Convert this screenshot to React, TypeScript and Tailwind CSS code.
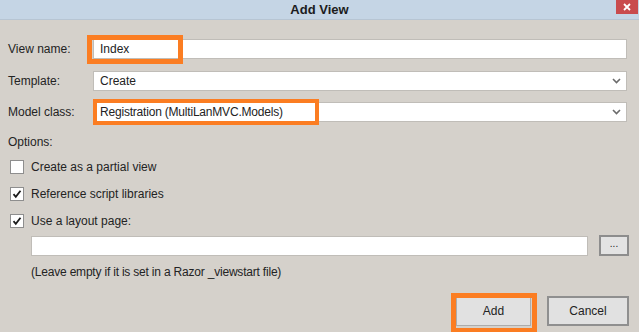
import React from 'react';

const Chevron = () => (
    <svg width="9" height="6" viewBox="0 0 9 6" className="absolute right-[5px] top-1/2 -translate-y-1/2">
        <path d="M1 1l3.5 3.5L8 1" fill="none" stroke="#6b6b6b" strokeWidth="1.6" />
    </svg>
);

function Check({ checked, label }: { checked: boolean; label: string }) {
    return (
        <div className="flex items-center h-[14px] pl-[2px]">
            <div className="w-[14px] h-[14px] bg-white border border-[#8e8e8e] flex items-center justify-center">
                {checked && (
                    <svg width="10" height="10" viewBox="0 0 10 10">
                        <path d="M1.5 5.2l2.3 2.6L8.5 1.8" fill="none" stroke="#1b1b1b" strokeWidth="1.8" />
                    </svg>
                )}
            </div>
            <span className="ml-[7px]">{label}</span>
        </div>
    );
}

export default function App() {
    return (
        <div className="w-[639px] h-[332px] overflow-hidden flex flex-col bg-[#d5d1cb] text-[12px] leading-[14px] text-[#232323] font-['Liberation_Sans',Arial,sans-serif]">
            {/* title bar */}
            <div className="relative h-[20px] shrink-0 flex items-center justify-center bg-[#c5d5e5] border-b border-[#b7c5d3]">
                <span className="text-[13px] font-bold text-[#1c1c1c]">Add View</span>
                <div className="absolute right-[1px] top-0 w-[22px] h-[14px] bg-[#c94b4d] flex items-center justify-center">
                    <svg width="8" height="8" viewBox="0 0 8 8">
                        <path d="M1 1l6 6M7 1l-6 6" stroke="#fff" strokeWidth="1.8" />
                    </svg>
                </div>
            </div>

            <div className="flex flex-col pl-[8px] pr-[10px]">
                {/* view name */}
                <div className="flex items-center mt-[19px] pr-[2px]">
                    <span className="w-[85px]">View name:</span>
                    <div className="relative flex-1 h-[20px] bg-white border border-[#c0bdb8] flex items-center pl-[6px]">
                        Index
                        <div className="absolute left-[-7px] top-[-5px] w-[96px] h-[29px] border-[5px] border-[#fb7d22]" />
                    </div>
                </div>

                {/* template */}
                <div className="flex items-center mt-[12px] pr-[2px]">
                    <span className="w-[85px]">Template:</span>
                    <div className="relative flex-1 h-[20px] bg-white border border-[#c0bdb8] flex items-center pl-[6px]">
                        Create
                        <Chevron />
                    </div>
                </div>

                {/* model class */}
                <div className="flex items-center mt-[11px] pr-[2px]">
                    <span className="w-[85px]">Model class:</span>
                    <div className="relative flex-1 h-[20px] bg-white border border-[#c0bdb8] flex items-center pl-[6px]">
                        <span className="tracking-[-0.2px]">Registration (MultiLanMVC.Models)</span>
                        <Chevron />
                        <div className="absolute left-[-1px] top-[-4px] w-[226px] h-[26px] border-[4px] border-[#fb7d22]" />
                    </div>
                </div>

                <div className="mt-[13px]">Options:</div>

                <div className="mt-[11px]">
                    <Check checked={false} label="Create as a partial view" />
                </div>
                <div className="mt-[13px]">
                    <Check checked label="Reference script libraries" />
                </div>
                <div className="mt-[13px]">
                    <Check checked label="Use a layout page:" />
                </div>

                {/* layout page */}
                <div className="flex items-center mt-[7px] pl-[23px] gap-[11px]">
                    <div className="flex-1 h-[20px] bg-white border border-[#c0bdb8]" />
                    <div className="w-[30px] h-[21px] bg-[#e3e3e3] border-2 border-[#8d8d8d] flex items-center justify-center text-[10px] leading-none pb-[3px]">
                        ...
                    </div>
                </div>
                <div className="mt-[9px] pl-[23px] tracking-[-0.2px]">(Leave empty if it is set in a Razor _viewstart file)</div>

                {/* buttons */}
                <div className="flex justify-end mt-[17px] gap-[16px]">
                    <div className="relative w-[75px] h-[30px] bg-[#e1e1e1] border border-[#acacac] flex items-center justify-center">
                        Add
                        <div className="absolute left-[-6px] top-[-4px] w-[86px] h-[40px] border-[5px] border-[#fb7d22]" />
                    </div>
                    <div className="w-[82px] h-[30px] bg-[#e1e1e1] border-2 border-[#8f8f8f] flex items-center justify-center">
                        Cancel
                    </div>
                </div>
            </div>
        </div>
    );
}
